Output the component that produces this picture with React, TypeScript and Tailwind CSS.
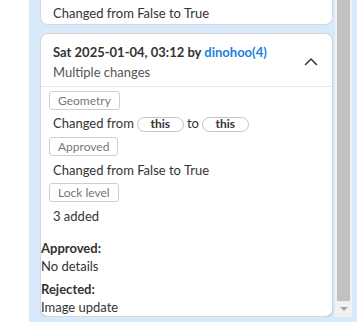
import React from 'react';

const ChevronUp: React.FC = () => (
  <svg width="14" height="14" viewBox="0 0 14 14" fill="none" className="shrink-0">
    <path d="M1.5 9.5 L7 4 L12.5 9.5" stroke="#333" strokeWidth="1.5" strokeLinecap="round" strokeLinejoin="round" />
  </svg>
);

const Tag: React.FC<{ label: string; className?: string }> = ({ label, className = '' }) => (
  <div className={`self-start inline-flex items-center h-[19px] px-2 rounded-[3px] border border-[#cfcfcf] text-[12px] text-[#777] leading-none ${className}`}>
    {label}
  </div>
);

const Pill: React.FC<{ label: string }> = ({ label }) => (
  <span className="inline-flex items-center justify-center w-[47px] h-[15px] rounded-full border border-[#c4c4c4] text-[12px] font-bold text-[#333] leading-none">
    {label}
  </span>
);

const App: React.FC = () => {
  return (
    <div
      className="flex w-[357px] h-[322px] overflow-hidden bg-white text-[13px] text-[#333]"
      style={{ fontFamily: 'Lato, "Noto Sans", sans-serif' }}
    >
      {/* left white strip */}
      <div className="w-[29px] shrink-0 bg-white" />

      {/* blue panel */}
      <div className="flex-1 flex bg-[#d8e9fc] pl-[11px]">
        <div className="flex-1 flex flex-col h-[317px] overflow-hidden pr-[2px]">
          {/* previous card, cut off at the top */}
          <div className="bg-white rounded-b-lg border-x border-b border-[#d6d6d6] px-3 pt-[3px] pb-[1px]">
            <p className="leading-5">Changed from False to True</p>
          </div>

          {/* current card */}
          <div className="mt-2 flex-1 flex flex-col bg-white rounded-lg border border-[#d6d6d6] shadow-[0_1px_1px_rgba(0,0,0,0.12)] overflow-hidden">
            {/* header */}
            <div className="flex items-center justify-between pl-3 pr-[14px] pt-2 pb-1 border-b border-[#e6e6e6]">
              <div>
                <p className="leading-5 font-bold">
                  Sat 2025-01-04, 03:12 by <span className="text-[#1a7fe0]">dinohoo(4)</span>
                </p>
                <p className="leading-5 text-[#555]">Multiple changes</p>
              </div>
              <ChevronUp />
            </div>

            {/* changes */}
            <div className="flex flex-col px-2 pt-[4px]">
              <Tag label="Geometry" />
              <div className="flex items-center gap-[3px] h-5 mt-[4px] pl-1">
                <span>Changed from</span>
                <Pill label="this" />
                <span>to</span>
                <Pill label="this" />
              </div>
              <Tag label="Approved" className="mt-[3px]" />
              <p className="leading-5 mt-[4px] pl-1">Changed from False to True</p>
              <Tag label="Lock level" className="mt-[3px]" />
              <p className="leading-5 mt-[4px] pl-1">3 added</p>
            </div>

            {/* reviews */}
            <div className="mt-[13px] leading-[18px]">
              <p className="font-bold">Approved:</p>
              <p>No details</p>
              <p className="font-bold mt-[5px]">Rejected:</p>
              <p>Image update</p>
            </div>
          </div>
        </div>

        {/* scrollbar */}
        <div className="w-[17px] h-[317px] shrink-0 bg-[#f1f1f1] flex flex-col items-center">
          <div className="w-[13px] h-[301px] bg-[#c1c1c1]" />
          <div className="flex-1 flex items-center justify-center">
            <div className="w-0 h-0 border-l-[4px] border-r-[4px] border-t-[4px] border-l-transparent border-r-transparent border-t-[#a3a3a3]" />
          </div>
        </div>
        <div className="w-[5px] shrink-0" />
      </div>
    </div>
  );
};

export default App;
